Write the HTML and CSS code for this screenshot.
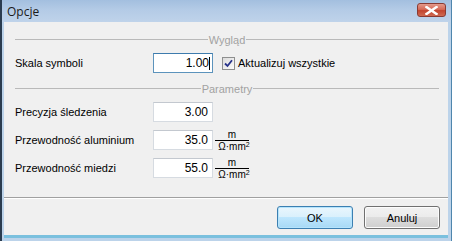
FILE: index.html
```html
<!DOCTYPE html>
<html lang="pl">
<head>
<meta charset="utf-8">
<title>Opcje</title>
<link rel="stylesheet" href="styles.css">
</head>
<body>
<div class="window">
  <div class="titlebar">
    <span class="title">Opcje</span>
    <span class="close">
      <svg width="13" height="9" viewBox="0 0 13 9"><path d="M1.5 1 L11.5 8 M11.5 1 L1.5 8" stroke="#fff" stroke-width="2.4" stroke-linecap="square"/></svg>
    </span>
  </div>
  <div class="client">
    <div class="content">
      <div class="group-head"><span class="gline"></span><span class="gtext">Wygląd</span><span class="gline"></span></div>
      <div class="row first">
        <span class="label">Skala symboli</span>
        <span class="input focused">1.00<span class="caret"></span></span>
        <span class="check">
          <svg width="9" height="9" viewBox="0 0 9 9"><path d="M1 4.5 L3.5 7 L8 1.2" fill="none" stroke="#27328a" stroke-width="1.8"/></svg>
        </span>
        <span class="check-label">Aktualizuj wszystkie</span>
      </div>
      <div class="group-head second"><span class="gline"></span><span class="gtext">Parametry</span><span class="gline"></span></div>
      <div class="params">
        <div class="row">
          <span class="label">Precyzja śledzenia</span>
          <span class="input">3.00</span>
        </div>
        <div class="row">
          <span class="label">Przewodność aluminium</span>
          <span class="input">35.0</span>
          <span class="unit"><span class="num">m</span><span class="den">Ω·mm<sup>2</sup></span></span>
        </div>
        <div class="row">
          <span class="label">Przewodność miedzi</span>
          <span class="input">55.0</span>
          <span class="unit"><span class="num">m</span><span class="den">Ω·mm<sup>2</sup></span></span>
        </div>
      </div>
    </div>
    <div class="sep"></div>
    <div class="buttons">
      <button class="btn default">OK</button>
      <button class="btn">Anuluj</button>
    </div>
  </div>
</div>
</body>
</html>
```
FILE: styles.css
```css
html, body {
  margin: 0;
  padding: 0;
  width: 452px;
  height: 241px;
  overflow: hidden;
  background: #f0f0f0;
}
.window {
  box-sizing: border-box;
  width: 452px;
  height: 241px;
  display: flex;
  flex-direction: column;
  border-left: 2px solid #2b3c4f;
  border-right: 1px solid #4f86ad;
  background: #bcd3ea;
  padding: 0 3px 3px 2px;
  font-family: "Liberation Sans", Arial, sans-serif;
  font-size: 11px;
  color: #000;
}
.titlebar {
  height: 22px;
  flex: none;
  display: flex;
  align-items: center;
  justify-content: space-between;
  background: linear-gradient(#a3bfdf 0%, #b4cbe6 45%, #bfd3ea 100%);
  margin: 0 -3px 0 -2px;
  padding: 0 5px 0 5px;
}
.title {
  font-family: "Open Sans", "DejaVu Sans", sans-serif;
  font-size: 12px;
  color: #1a1a1a;
  padding-top: 1px;
}
.close {
  width: 27px;
  height: 12px;
  margin-top: -2px;
  border: 1px solid #8a3b33;
  border-radius: 3px;
  background: linear-gradient(#e39a8c 0%, #d66a57 45%, #c2452f 55%, #cf6a52 100%);
  display: flex;
  align-items: center;
  justify-content: center;
}
.client {
  flex: 1;
  background: #f0f0f0;
  display: flex;
  flex-direction: column;
  border-bottom: 3px solid #7ac0de;
}
.content {
  padding: 0 9px 0 11px;
}
.group-head {
  display: flex;
  align-items: center;
  height: 13px;
  margin-top: 11px;
  color: #a2a2a2;
}
.group-head.second {
  margin-top: 9px;
}
.gline {
  flex: 1;
  height: 1px;
  background: #b9b9b9;
}
.gtext {
  padding: 0 1px;
}
.row {
  display: flex;
  align-items: center;
  height: 20px;
}
.row.first {
  margin-top: 7px;
}
.params {
  margin-top: 7px;
  display: flex;
  flex-direction: column;
  gap: 8px;
}
.label {
  width: 138px;
  flex: none;
}
.input {
  box-sizing: border-box;
  width: 60px;
  height: 20px;
  flex: none;
  background: #fff;
  border: 1px solid #d6dbe1;
  border-top-color: #c3c8cf;
  display: flex;
  align-items: center;
  justify-content: flex-end;
  padding-right: 4px;
  font-size: 12px;
}
.input.focused {
  border-color: #5c93bc;
  border-top-color: #3d7bad;
  padding-right: 2px;
}
.caret {
  width: 1px;
  height: 13px;
  background: #000;
  margin-left: 0px;
}
.check {
  box-sizing: border-box;
  width: 13px;
  height: 13px;
  margin-left: 9px;
  border: 1px solid #8e8f8f;
  background: linear-gradient(135deg, #dcdcdc, #fbfbfb);
  display: flex;
  align-items: center;
  justify-content: center;
}
.check-label {
  margin-left: 3px;
}
.unit {
  display: flex;
  flex-direction: column;
  align-items: center;
  margin-left: 2px;
  font-size: 10px;
  line-height: 9px;
}
.num {
  padding-left: 0;
  border-bottom: 1px solid #000;
  width: 34px;
  text-align: center;
  padding-bottom: 1px;
  margin-right: 2px;
}
.den {
  padding-top: 1px;
  padding-left: 2px;
}
.den sup {
  font-size: 7px;
  vertical-align: 3px;
  line-height: 0;
}
.sep {
  margin-top: 19px;
  height: 1px;
  background: #a0a0a0;
  border-bottom: 1px solid #fff;
}
.buttons {
  display: flex;
  justify-content: flex-end;
  gap: 11px;
  padding: 7px 8px 0 0;
}
.btn {
  box-sizing: border-box;
  width: 76px;
  height: 23px;
  border: 1px solid #707070;
  border-radius: 3px;
  background: linear-gradient(#f2f2f2 0%, #ebebeb 49%, #dddddd 50%, #cfcfcf 100%);
  font-family: "Liberation Sans", Arial, sans-serif;
  font-size: 11px;
  color: #000;
  padding: 0;
  box-shadow: inset 0 0 0 1px #fcfcfc;
}
.btn.default {
  border-color: #3c7fb1;
  background: linear-gradient(#eaf6fd 0%, #d9f0fc 49%, #bee6fd 50%, #a7d9f5 100%);
  box-shadow: inset 0 0 0 1px #b5e4fc;
}
```
